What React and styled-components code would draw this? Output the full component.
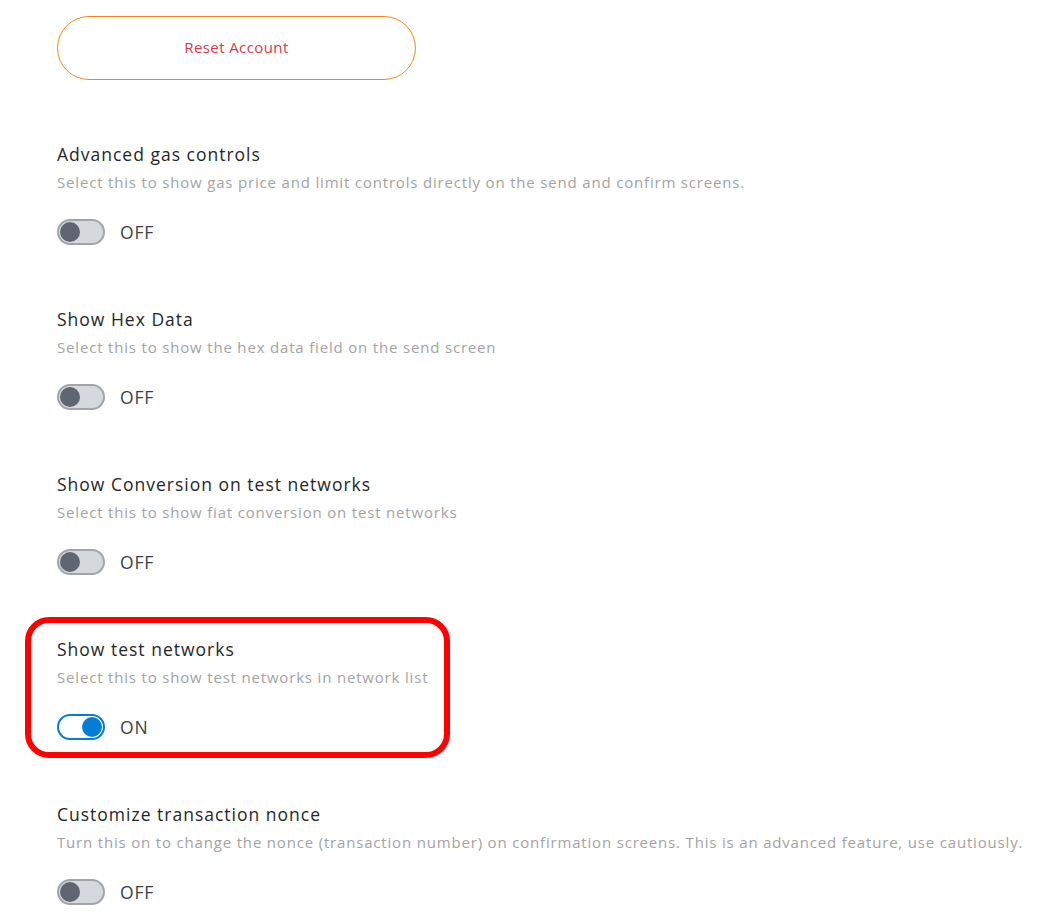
import React from "react";
import styled, { createGlobalStyle, css } from "styled-components";

const Global = createGlobalStyle`
  html, body { margin: 0; padding: 0; background: #ffffff; }
  body { font-family: "Open Sans", "Noto Sans", sans-serif; -webkit-font-smoothing: antialiased; }
`;

const Page = styled.div`
  display: flex;
  flex-direction: column;
  padding: 16px 0 0 57px;
  gap: 62px;
`;

const ResetButton = styled.button`
  width: 359px;
  height: 64px;
  border: 1px solid #f6851b;
  border-radius: 32px;
  background: #ffffff;
  color: #d73a49;
  font-family: inherit;
  font-size: 15px;
  letter-spacing: 0.4px;
  cursor: pointer;
  padding: 0 0 2px;
`;

const Section = styled.section`
  position: relative;
  display: flex;
  flex-direction: column;
  align-items: flex-start;
  ${(p) =>
    p.$highlight &&
    css`
      &::before {
        content: "";
        position: absolute;
        top: -20px;
        left: -32px;
        width: 425px;
        bottom: -18px;
        border: 6px solid #ff0000;
        border-radius: 24px;
        box-sizing: border-box;
        pointer-events: none;
      }
    `}
`;

const Title = styled.div`
  font-size: 17.5px;
  line-height: 24px;
  letter-spacing: 1px;
  color: #24272a;
`;

const Description = styled.div`
  margin-top: 6px;
  font-size: 15px;
  line-height: 20px;
  letter-spacing: 0.82px;
  color: #a3a3a3;
`;

const ToggleRow = styled.div`
  margin-top: 27px;
  display: flex;
  align-items: center;
  gap: 15px;
`;

const Track = styled.div`
  position: relative;
  width: 48px;
  height: 26px;
  box-sizing: border-box;
  border-radius: 13px;
  border: 2px solid ${(p) => (p.$on ? "#037dd6" : "#a0a5ab")};
  background: ${(p) => (p.$on ? "#ffffff" : "#d6d9dc")};
`;

const Knob = styled.div`
  position: absolute;
  top: 1px;
  ${(p) => (p.$on ? "right: 1px;" : "left: 1px;")}
  width: 20px;
  height: 20px;
  border-radius: 50%;
  background: ${(p) => (p.$on ? "#037dd6" : "#5f6672")};
`;

const ToggleLabel = styled.span`
  font-size: 17.5px;
  letter-spacing: 0.8px;
  color: #3a3f45;
`;

const Toggle = ({ on }) => (
  <ToggleRow>
    <Track $on={on}>
      <Knob $on={on} />
    </Track>
    <ToggleLabel>{on ? "ON" : "OFF"}</ToggleLabel>
  </ToggleRow>
);

const settings = [
  {
    title: "Advanced gas controls",
    desc: "Select this to show gas price and limit controls directly on the send and confirm screens.",
    on: false,
  },
  {
    title: "Show Hex Data",
    desc: "Select this to show the hex data field on the send screen",
    on: false,
  },
  {
    title: "Show Conversion on test networks",
    desc: "Select this to show fiat conversion on test networks",
    on: false,
  },
  {
    title: "Show test networks",
    desc: "Select this to show test networks in network list",
    on: true,
    highlight: true,
  },
  {
    title: "Customize transaction nonce",
    desc: "Turn this on to change the nonce (transaction number) on confirmation screens. This is an advanced feature, use cautiously.",
    on: false,
  },
];

export default function App() {
  return (
    <>
      <Global />
      <Page>
        <div>
          <ResetButton>Reset Account</ResetButton>
        </div>
        {settings.map((s) => (
          <Section key={s.title} $highlight={s.highlight}>
            <Title>{s.title}</Title>
            <Description>{s.desc}</Description>
            <Toggle on={s.on} />
          </Section>
        ))}
      </Page>
    </>
  );
}
